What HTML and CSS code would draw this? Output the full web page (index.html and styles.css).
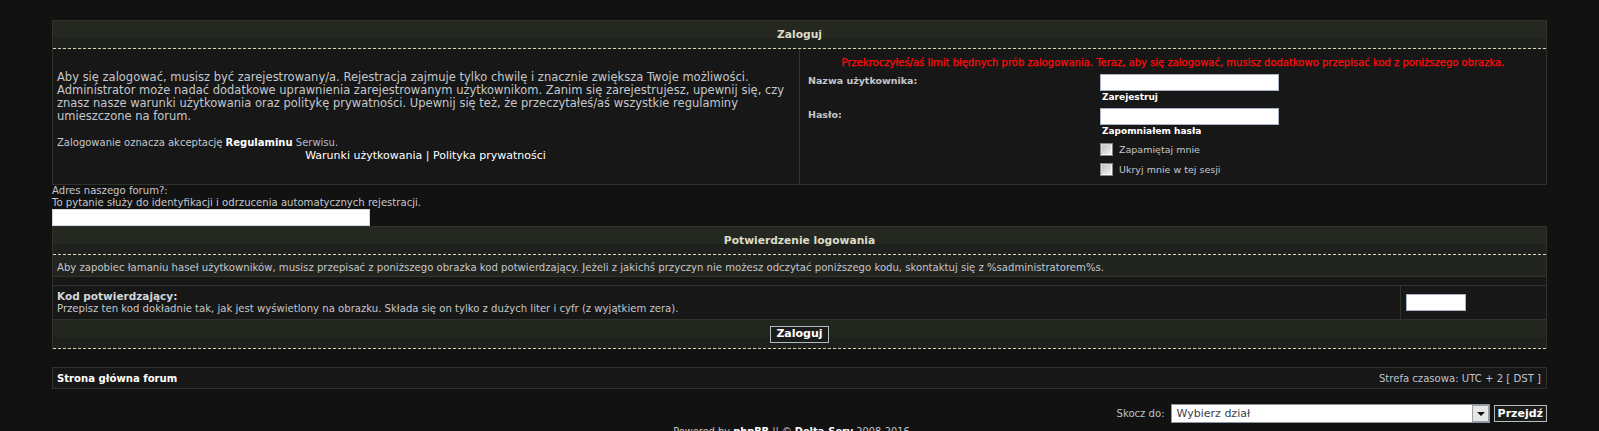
FILE: index.html
```html
<!DOCTYPE html>
<html>
<head><meta charset="utf-8"/>
<title>Zaloguj</title>
<link rel="stylesheet" href="styles.css">
</head>
<body>
<div class="page">

<div class="panel">
    <div class="panel-head">Zaloguj</div>
    <div class="login-body">
        <div class="login-info">
            <div>
                <p class="intro">Aby się zalogować, musisz być zarejestrowany/a. Rejestracja zajmuje tylko chwilę i znacznie zwiększa Twoje możliwości. Administrator może nadać dodatkowe uprawnienia zarejestrowanym użytkownikom. Zanim się zarejestrujesz, upewnij się, czy znasz nasze warunki użytkowania oraz politykę prywatności. Upewnij się też, że przeczytałeś/aś wszystkie regulaminy umieszczone na forum.</p>
                <p class="terms">Zalogowanie oznacza akceptację <a href="#">Regulaminu</a> <span class="muted">Serwisu.</span></p>
                <p class="policy"><a href="#">Warunki użytkowania</a> | <a href="#">Polityka prywatności</a></p>
            </div>
        </div>
        <div class="login-form">
            <p class="error">Przekroczyłeś/aś limit błędnych prób zalogowania. Teraz, aby się zalogować, musisz dodatkowo przepisać kod z poniższego obrazka.</p>
            <div class="field-row">
                <label class="field-label">Nazwa użytkownika:</label>
                <div>
                    <input class="text-input" type="text">
                    <a class="field-link" href="#">Zarejestruj</a>
                </div>
            </div>
            <div class="field-row last">
                <label class="field-label">Hasło:</label>
                <div>
                    <input class="text-input" type="password">
                    <a class="field-link" href="#">Zapomniałem hasła</a>
                </div>
            </div>
            <label class="check-row"><input class="checkbox" type="checkbox"> Zapamiętaj mnie</label>
            <label class="check-row"><input class="checkbox" type="checkbox"> Ukryj mnie w tej sesji</label>
        </div>
    </div>
</div>

<div class="question">
    <div>Adres naszego forum?:</div>
    <div>To pytanie służy do identyfikacji i odrzucenia automatycznych rejestracji.</div>
    <input class="question-input" type="text">
</div>

<div class="panel confirm">
    <div class="panel-head">Potwierdzenie logowania</div>
    <div class="confirm-desc">Aby zapobiec łamaniu haseł użytkowników, musisz przepisać z poniższego obrazka kod potwierdzający. Jeżeli z jakichś przyczyn nie możesz odczytać poniższego kodu, skontaktuj się z %sadministratorem%s.</div>
    <div class="confirm-gap"></div>
    <div class="confirm-code">
        <div class="code-text">
            <div class="code-title">Kod potwierdzający:</div>
            <div>Przepisz ten kod dokładnie tak, jak jest wyświetlony na obrazku. Składa się on tylko z dużych liter i cyfr (z wyjątkiem zera).</div>
        </div>
        <div class="code-field"><input class="code-input" type="text"></div>
    </div>
    <div class="panel-foot"><button class="btn btn-wide" type="button">Zaloguj</button></div>
</div>

<div class="navbar">
    <a href="#">Strona główna forum</a>
    <span class="timezone">Strefa czasowa: UTC + 2 [ DST ]</span>
</div>

<div class="jumpbox">
    <span class="jump-label">Skocz do:</span>
    <div class="jump-select"><span class="jump-value">Wybierz dział</span><span class="jump-arrow"></span></div>
    <button class="btn" type="button">Przejdź</button>
</div>

<div class="copyright">Powered by <b>phpBB</b> || © <b>Delta-Serv</b> 2008-2016</div>

</div>
</body>
</html>
```

FILE: styles.css
```css
* { box-sizing: border-box; }

body {
    margin: 0;
    background: #121212;
    color: #c4c7cc;
    font-family: "DejaVu Sans", Verdana, sans-serif;
    font-size: 10.1px;
}

a { color: #fff; text-decoration: none; }

.page { padding: 20px 52px 0; }

/* boxes */
.panel {
    border: 1px solid #30322c;
    background: #171717;
}

.panel-head {
    height: 28px;
    line-height: 27px;
    background: linear-gradient(#252721 0, #252721 17px, #1f211c 17px);
    border-bottom: 1px dashed #d6d6bc;
    text-align: center;
    font-weight: bold;
    font-size: 10.7px;
    color: #dcdbc5;
}

.login-body {
    display: grid;
    grid-template-columns: 747px 1fr;
}

.login-info {
    border-right: 1px solid #30322c;
    display: flex;
    align-items: center;
    padding: 0 5px 0 4px;
}

.login-info p { margin: 0; line-height: 13px; }
.intro { font-size: 11.5px; margin-bottom: 13px !important; }
.terms { font-size: 10px; }
.terms a { font-weight: bold; }
.muted { color: #b4bcc8; }
.policy { font-size: 11px; text-align: center; color: #fff; }

.login-form { padding: 7px 8px 5px; }

.error {
    margin: 0 0 5px;
    text-align: center;
    color: #ff0a0a;
    -webkit-text-stroke: 0.25px #ff0a0a;
    font-size: 10px;
    line-height: 13px;
}

.field-row {
    display: grid;
    grid-template-columns: 292px 1fr;
    margin-bottom: 5px;
}
.field-row.last { margin-bottom: 2px; }

.field-label {
    font-weight: bold;
    font-size: 9.5px;
    line-height: 13px;
}

.text-input, .question-input, .code-input {
    display: block;
    margin: 0;
    padding: 0 2px;
    height: 17px;
    background: #fff;
    border: 1px solid #a8b4c2;
    font: 11px "DejaVu Sans", sans-serif;
}
.text-input { width: 179px; }

.field-link {
    display: block;
    padding-left: 2px;
    font-weight: bold;
    font-size: 9px;
    line-height: 12px;
}

.check-row {
    display: flex;
    align-items: center;
    gap: 6px;
    height: 20px;
    margin-left: 292px;
    font-size: 9.5px;
}

.checkbox {
    appearance: none;
    -webkit-appearance: none;
    margin: 0;
    width: 13px;
    height: 13px;
    border: 1px solid #84878a;
    background: linear-gradient(135deg, #bcbcbc, #f4f4f4);
    box-shadow: inset 1px 1px 0 #dadada, inset -1px -1px 0 #fafafa;
}

/* question under the login box */
.question { line-height: 12px; }
.question-input { width: 318px; border-color: #d0d6dc; }

/* confirmation box */
.confirm { border-bottom: 0; }

.confirm-desc {
    background: #22241f;
    border-bottom: 1px solid #30322c;
    padding: 6px 5px 2px 4px;
    line-height: 13px;
}

.confirm-gap {
    height: 9px;
    border-bottom: 1px solid #30322c;
}

.confirm-code {
    display: grid;
    grid-template-columns: 1fr 146px;
    border-bottom: 1px solid #30322c;
}

.code-text { padding: 4px 4px; line-height: 12px; }
.code-title { font-weight: bold; font-size: 10.5px; line-height: 13px; color: #d4d6d8; }

.code-field {
    border-left: 1px solid #30322c;
    padding-left: 5px;
    display: flex;
    align-items: center;
}
.code-input { width: 60px; }

.panel-foot {
    height: 29px;
    background: linear-gradient(#23251f 0, #23251f 17px, #1e201b 17px);
    border-bottom: 1px dashed #d6d6bc;
    display: flex;
    justify-content: center;
    align-items: center;
}

.btn {
    margin: 0;
    height: 17px;
    padding: 0 3px;
    background: #1b1d1a;
    border: 1px solid #b4bcc4;
    color: #fff;
    font: bold 11px "DejaVu Sans", sans-serif;
    line-height: 14px;
}
.btn-wide { padding: 0 5px; }

/* footer */
.navbar {
    margin-top: 18px;
    height: 22px;
    border: 1px solid #30322c;
    background: #171717;
    display: flex;
    justify-content: space-between;
    align-items: center;
    padding: 0 5px 0 4px;
}
.navbar a { font-weight: bold; }
.timezone { color: #bcc4ce; }

.jumpbox {
    margin-top: 15px;
    display: flex;
    justify-content: flex-end;
    align-items: center;
    gap: 4px;
}
.jump-label { margin-right: 2px; color: #bcc4ce; }

.jump-select {
    width: 319px;
    height: 19px;
    background: #fff;
    border: 1px solid #8c96a0;
    display: flex;
}
.jump-value {
    flex: 1;
    padding-left: 5px;
    font-size: 11px;
    line-height: 17px;
    color: #3a4250;
}
.jump-arrow {
    width: 17px;
    border: 1px solid #9aa0a6;
    background: #e6e6e6;
    position: relative;
}
.jump-arrow::after {
    content: "";
    position: absolute;
    left: 4px;
    top: 6px;
    border-left: 4px solid transparent;
    border-right: 4px solid transparent;
    border-top: 4px solid #111;
}

.copyright {
    margin-top: 2px;
    padding-right: 16px;
    text-align: center;
    font-size: 9.8px;
    line-height: 14px;
}
.copyright b { color: #fff; }
```
